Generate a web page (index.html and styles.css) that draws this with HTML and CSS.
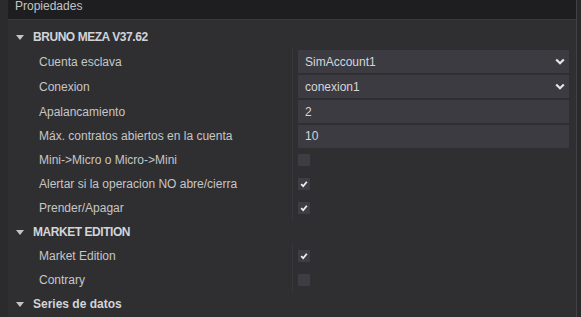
FILE: index.html
```html
<!DOCTYPE html>
<html lang="es">
<head>
<meta charset="utf-8">
<title>Propiedades</title>
<link rel="stylesheet" href="styles.css">
</head>
<body>
<div class="panel">
  <div class="gutter"></div>
  <div class="main">
    <div class="header">Propiedades</div>
    <div class="list">
      <div class="cat"><span class="tri"></span><span class="cat-name caps">BRUNO MEZA V37.62</span></div>

      <div class="prop input-row first">
        <div class="label">Cuenta esclava</div>
        <div class="value"><div class="field"><span>SimAccount1</span><svg class="chev" width="10" height="7" viewBox="0 0 10 7"><polyline points="1.2,1.5 5,5.2 8.8,1.5" fill="none" stroke="#e6e6e6" stroke-width="2.2"/></svg></div></div>
      </div>
      <div class="prop input-row">
        <div class="label">Conexion</div>
        <div class="value"><div class="field"><span>conexion1</span><svg class="chev" width="10" height="7" viewBox="0 0 10 7"><polyline points="1.2,1.5 5,5.2 8.8,1.5" fill="none" stroke="#e6e6e6" stroke-width="2.2"/></svg></div></div>
      </div>
      <div class="prop input-row">
        <div class="label">Apalancamiento</div>
        <div class="value"><div class="field"><span>2</span></div></div>
      </div>
      <div class="prop input-row last">
        <div class="label">Máx. contratos abiertos en la cuenta</div>
        <div class="value"><div class="field"><span>10</span></div></div>
      </div>

      <div class="prop check-row">
        <div class="label">Mini-&gt;Micro o Micro-&gt;Mini</div>
        <div class="value"><span class="box"></span></div>
      </div>
      <div class="prop check-row">
        <div class="label">Alertar si la operacion NO abre/cierra</div>
        <div class="value"><span class="box"><svg width="12" height="12" viewBox="0 0 12 12"><path d="M3.2 6.2 L5.2 8.2 L8.8 3.8" fill="none" stroke="#f0f0f0" stroke-width="1.8"/></svg></span></div>
      </div>
      <div class="prop check-row">
        <div class="label">Prender/Apagar</div>
        <div class="value"><span class="box"><svg width="12" height="12" viewBox="0 0 12 12"><path d="M3.2 6.2 L5.2 8.2 L8.8 3.8" fill="none" stroke="#f0f0f0" stroke-width="1.8"/></svg></span></div>
      </div>

      <div class="cat"><span class="tri"></span><span class="cat-name caps">MARKET EDITION</span></div>
      <div class="prop check-row">
        <div class="label">Market Edition</div>
        <div class="value"><span class="box"><svg width="12" height="12" viewBox="0 0 12 12"><path d="M3.2 6.2 L5.2 8.2 L8.8 3.8" fill="none" stroke="#f0f0f0" stroke-width="1.8"/></svg></span></div>
      </div>
      <div class="prop check-row">
        <div class="label">Contrary</div>
        <div class="value"><span class="box"></span></div>
      </div>

      <div class="cat"><span class="tri"></span><span class="cat-name">Series de datos</span></div>
    </div>
  </div>
  <div class="scroll"></div>
</div>
</body>
</html>
```

FILE: styles.css
```css
html, body {
  margin: 0;
  padding: 0;
  background: #2f2f32;
  font-family: "Liberation Sans", Arial, sans-serif;
  font-size: 12px;
  color: #c8c8c8;
}

.panel {
  display: flex;
  width: 581px;
  height: 317px;
  overflow: hidden;
}

.gutter {
  width: 8px;
  flex: none;
  background: #2b2b2e;
}

.main {
  flex: 1;
  display: flex;
  flex-direction: column;
  min-width: 0;
}

.scroll {
  width: 4px;
  flex: none;
  background: #2a2a2d;
  border-left: 1px solid #424245;
}

.header {
  height: 19px;
  line-height: 12px;
  background: #1e1e20;
  border-bottom: 1px solid #3a3a3d;
  padding-left: 7px;
  color: #c4c4c4;
  overflow: hidden;
}

.list {
  padding-top: 5px;
  display: flex;
  flex-direction: column;
}

.cat {
  height: 24px;
  display: flex;
  align-items: center;
}

.tri {
  width: 0;
  height: 0;
  margin-left: 8px;
  margin-right: 9px;
  border-left: 4px solid transparent;
  border-right: 4px solid transparent;
  border-top: 5px solid #c4c4c4;
}

.cat-name {
  font-weight: bold;
  color: #d2d4d8;
}

.cat-name.caps {
  letter-spacing: -0.45px;
}

.prop {
  display: grid;
  grid-template-columns: 284px 1fr;
}

.input-row { height: 25px; }
.input-row.last { height: 24px; }
.check-row { height: 24px; }

.label {
  padding-left: 31px;
  display: flex;
  align-items: center;
  color: #c6c6c6;
  white-space: nowrap;
}

.value {
  border-left: 1px solid #38383b;
  padding: 0 7px 0 5px;
  display: flex;
  align-items: center;
}

.field {
  flex: 1;
  height: 23px;
  background: #3c3b41;
  display: flex;
  align-items: center;
  justify-content: space-between;
  padding: 0 4px 0 7px;
  color: #d6d6d6;
  box-sizing: border-box;
}

.chev {
  display: block;
}

.box {
  width: 12px;
  height: 12px;
  background: #3e3d43;
  display: block;
}

.box svg {
  display: block;
}
```
